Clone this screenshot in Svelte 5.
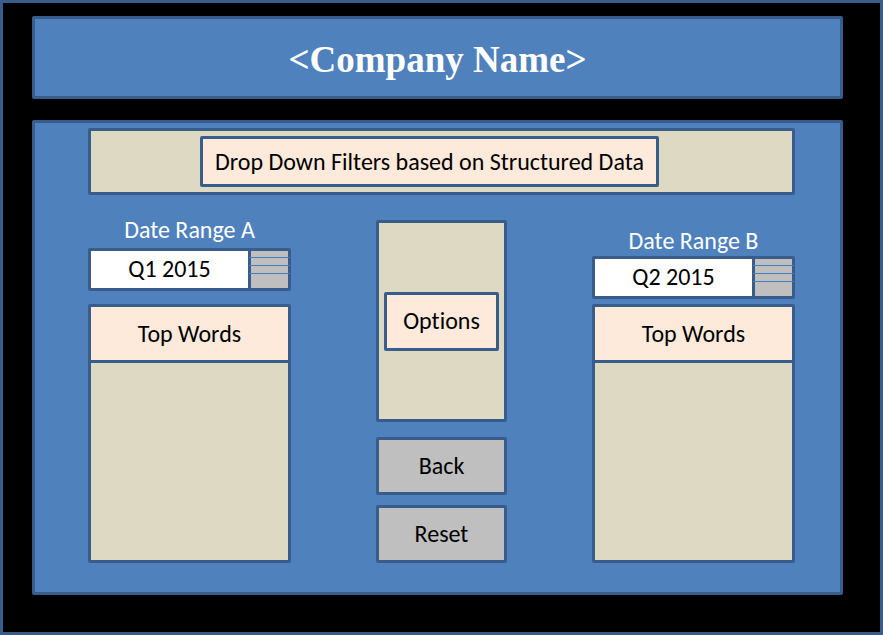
<script>
  let rangeA = $state('Q1 2015');
  let rangeB = $state('Q2 2015');
  const quarters = ['Q1 2015', 'Q2 2015', 'Q3 2015', 'Q4 2015'];

  function reset() {
    rangeA = 'Q1 2015';
    rangeB = 'Q2 2015';
  }
</script>

{#snippet stripes()}
  <span class="stripes" aria-hidden="true"><i></i><i></i><i></i></span>
{/snippet}

<div class="screen">
  <header><h1>&lt;Company Name&gt;</h1></header>

  <main>
    <section class="filters">
      <h2 class="tag">Drop Down Filters based on Structured Data</h2>
    </section>

    <div class="columns">
      <section class="range first">
        <label for="range-a">Date Range A</label>
        <div class="picker">
          <select id="range-a" bind:value={rangeA}>
            {#each quarters as q}<option>{q}</option>{/each}
          </select>
          {@render stripes()}
        </div>
        <div class="words"><h2>Top Words</h2></div>
      </section>

      <section class="center">
        <div class="options"><h2 class="tag">Options</h2></div>
        <button type="button" class="back">Back</button>
        <button type="button" onclick={reset}>Reset</button>
      </section>

      <section class="range second">
        <label for="range-b">Date Range B</label>
        <div class="picker">
          <select id="range-b" bind:value={rangeB}>
            {#each quarters as q}<option>{q}</option>{/each}
          </select>
          {@render stripes()}
        </div>
        <div class="words"><h2>Top Words</h2></div>
      </section>
    </div>
  </main>
</div>

<style>
  .screen,
  .screen * {
    box-sizing: border-box;
  }
  .screen {
    --line: #385d8a;
    --blue: #4f81bd;
    --sand: #ddd9c3;
    --peach: #fdeada;
    --grey: #bfbfbf;
    display: flex;
    flex-direction: column;
    gap: 21px;
    min-height: 100vh;
    padding: 13px 37px 37px 29px;
    border: 3px solid var(--line);
    background: #000;
    color: #000;
    font: 24px/28px Carlito, Calibri, Lato, sans-serif;
    font-variant-ligatures: none;
  }
  h1,
  h2 {
    margin: 0;
    font: inherit;
    font-variant-ligatures: none;
  }
  header,
  main {
    border: 3px solid var(--line);
    border-radius: 2px;
    background: var(--blue);
  }
  header {
    display: flex;
    align-items: center;
    justify-content: center;
    height: 83px;
    padding-top: 4px;
  }
  h1 {
    color: #fff;
    font: bold 37px/44px 'Liberation Serif', 'Times New Roman', serif;
  }
  main {
    display: flex;
    flex: 1;
    flex-direction: column;
    padding: 5px 45px 29px 53px;
  }
  .filters {
    display: flex;
    justify-content: center;
    padding: 5px 24px 5px 0;
    border: 3px solid var(--line);
    border-radius: 2px;
    background: var(--sand);
  }
  .tag {
    display: flex;
    align-items: center;
    justify-content: center;
    border: 3px solid var(--line);
    border-radius: 2px;
    background: var(--peach);
    white-space: nowrap;
  }
  .filters .tag {
    height: 51px;
    padding: 0 12px;
  }
  .columns {
    display: flex;
    flex: 1;
    justify-content: space-between;
  }
  .range {
    display: flex;
    flex-direction: column;
    width: 203px;
  }
  .first {
    padding-top: 21px;
  }
  .second {
    padding-top: 32px;
  }
  label {
    color: #fff;
    text-align: center;
  }
  .first label {
    margin-bottom: 4px;
  }
  .second label {
    margin-bottom: 1px;
  }
  .picker {
    position: relative;
    height: 43px;
    border: 3px solid var(--line);
    border-radius: 2px;
  }
  .first .picker {
    margin-bottom: 13px;
  }
  .second .picker {
    margin-bottom: 5px;
  }
  select {
    width: 100%;
    height: 100%;
    padding: 0 40px 2px 0;
    border: 0;
    border-radius: 0;
    appearance: none;
    background: #fff;
    color: #000;
    font: inherit;
    text-align: center;
    text-align-last: center;
  }
  .stripes {
    position: absolute;
    inset: 0 0 0 auto;
    display: flex;
    flex-direction: column;
    gap: 7px;
    width: 40px;
    padding-top: 6px;
    border-left: 3px solid var(--line);
    background: var(--grey);
    pointer-events: none;
  }
  .stripes i {
    height: 1px;
    margin: 0 -2px;
    background: #4a7ebb;
  }
  .words {
    flex: 1;
    border: 3px solid var(--line);
    border-radius: 2px;
    background: var(--sand);
  }
  .words h2 {
    display: flex;
    align-items: center;
    justify-content: center;
    height: 56px;
    border-bottom: 3px solid var(--line);
    background: var(--peach);
  }
  .center {
    display: flex;
    flex-direction: column;
    width: 131px;
    padding-top: 25px;
  }
  .options {
    display: flex;
    flex: 1;
    flex-direction: column;
    justify-content: center;
    padding: 0 5px;
    border: 3px solid var(--line);
    border-radius: 2px;
    background: var(--sand);
  }
  .options .tag {
    height: 59px;
  }
  button {
    height: 58px;
    padding: 0;
    border: 3px solid var(--line);
    border-radius: 2px;
    background: var(--grey);
    color: #000;
    font: inherit;
    cursor: pointer;
  }
  .back {
    margin: 15px 0 10px;
  }
</style>
